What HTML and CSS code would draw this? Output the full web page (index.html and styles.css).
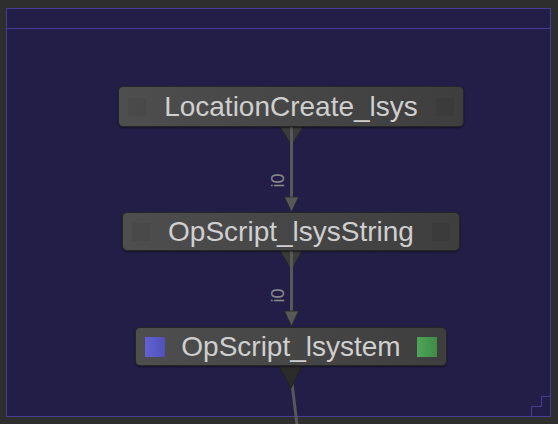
FILE: index.html
```html
<!DOCTYPE html>
<html>
<head>
<meta charset="utf-8">
<link rel="stylesheet" href="styles.css">
</head>
<body>
<div class="panel">
  <div class="header"></div>
  <div class="canvas">
    <svg class="wires" width="543" height="387" viewBox="0 0 543 387">
      <polygon class="port" points="273,98 296,98 284.5,116"/>
      <line class="wire" x1="284.5" y1="98" x2="284.5" y2="170"/>
      <polygon class="arrow" points="277.5,168 291.5,168 284.5,183"/>
      <text class="lbl" transform="translate(271,151.5) rotate(-90)">i0</text>

      <polygon class="port" points="273,222 295,222 284.5,241"/>
      <line class="wire" x1="284.5" y1="222" x2="284.5" y2="284"/>
      <polygon class="arrow" points="277.5,282 291.5,282 284.5,297"/>
      <text class="lbl" transform="translate(271,266.5) rotate(-90)">i0</text>

      <line class="wire" x1="284.5" y1="350" x2="290" y2="396"/>
      <polygon class="port dark" points="272,337 295,337 284,359"/>

      <polyline class="corner" points="524.5,387 524.5,377.5 534.5,377.5 534.5,367.5 543,367.5"/>
    </svg>

    <div class="node n1">
      <span class="sq"></span>
      <span class="name">LocationCreate_lsys</span>
      <span class="sq"></span>
    </div>
    <div class="node n2">
      <span class="sq"></span>
      <span class="name">OpScript_lsysString</span>
      <span class="sq"></span>
    </div>
    <div class="node n3">
      <span class="sq big blue"></span>
      <span class="name">OpScript_lsystem</span>
      <span class="sq big green"></span>
    </div>
  </div>
</div>
</body>
</html>
```

FILE: styles.css
```css
* { box-sizing: border-box; }
html, body { margin: 0; }
body {
  width: 558px;
  height: 424px;
  padding: 8px 7px 7px 6px;
  background: #2e2e2e;
  font-family: "Liberation Sans", Arial, sans-serif;
  overflow: hidden;
}
.panel {
  width: 545px;
  height: 409px;
  border: 1px solid #463d95;
  background: #221e47;
  display: flex;
  flex-direction: column;
}
.header {
  height: 20px;
  border-bottom: 1px solid #463d95;
  flex: none;
}
.canvas {
  position: relative;
  flex: 1;
}
.wires {
  position: absolute;
  left: 0;
  top: 0;
  overflow: visible;
}
.port { fill: #3b3b3b; stroke: #262626; stroke-width: 1; }
.port.dark { fill: #2b2b2b; stroke: #222; }
.wire { stroke: #585858; stroke-width: 3; }
.arrow { fill: #585858; stroke: #2a2a2a; stroke-width: 0.8; }
.lbl {
  fill: #8a8a8a;
  font-family: "Liberation Sans", Arial, sans-serif;
  font-size: 18px;
  text-anchor: middle;
  dominant-baseline: central;
}
.corner { fill: none; stroke: #463d95; stroke-width: 1; }

.node {
  position: absolute;
  display: flex;
  align-items: center;
  justify-content: space-between;
  padding: 0 9px;
  border: 1px solid #262626;
  border-radius: 5px;
  background: linear-gradient(to right, #4e4e4e, #3e3e3e);
  box-shadow: 0 1px 2px rgba(0,0,0,0.45);
}
.n1 { left: 111px; top: 57px; width: 346px; height: 41px; }
.n2 { left: 115px; top: 183px; width: 338px; height: 39px; }
.n3 { left: 128px; top: 298px; width: 312px; height: 39px; }
.name {
  flex: 1;
  text-align: center;
  color: #cfcfcf;
  font-size: 28px;
  line-height: 1;
  white-space: nowrap;
}
.sq {
  width: 18px;
  height: 18px;
  background: rgba(0,0,0,0.05);
  flex: none;
}
.sq.big { width: 20px; height: 20px; }
.blue { background: linear-gradient(to right, #6262d6, #5050b8); }
.green { background: linear-gradient(to right, #4ea656, #3f8a47); }
```
